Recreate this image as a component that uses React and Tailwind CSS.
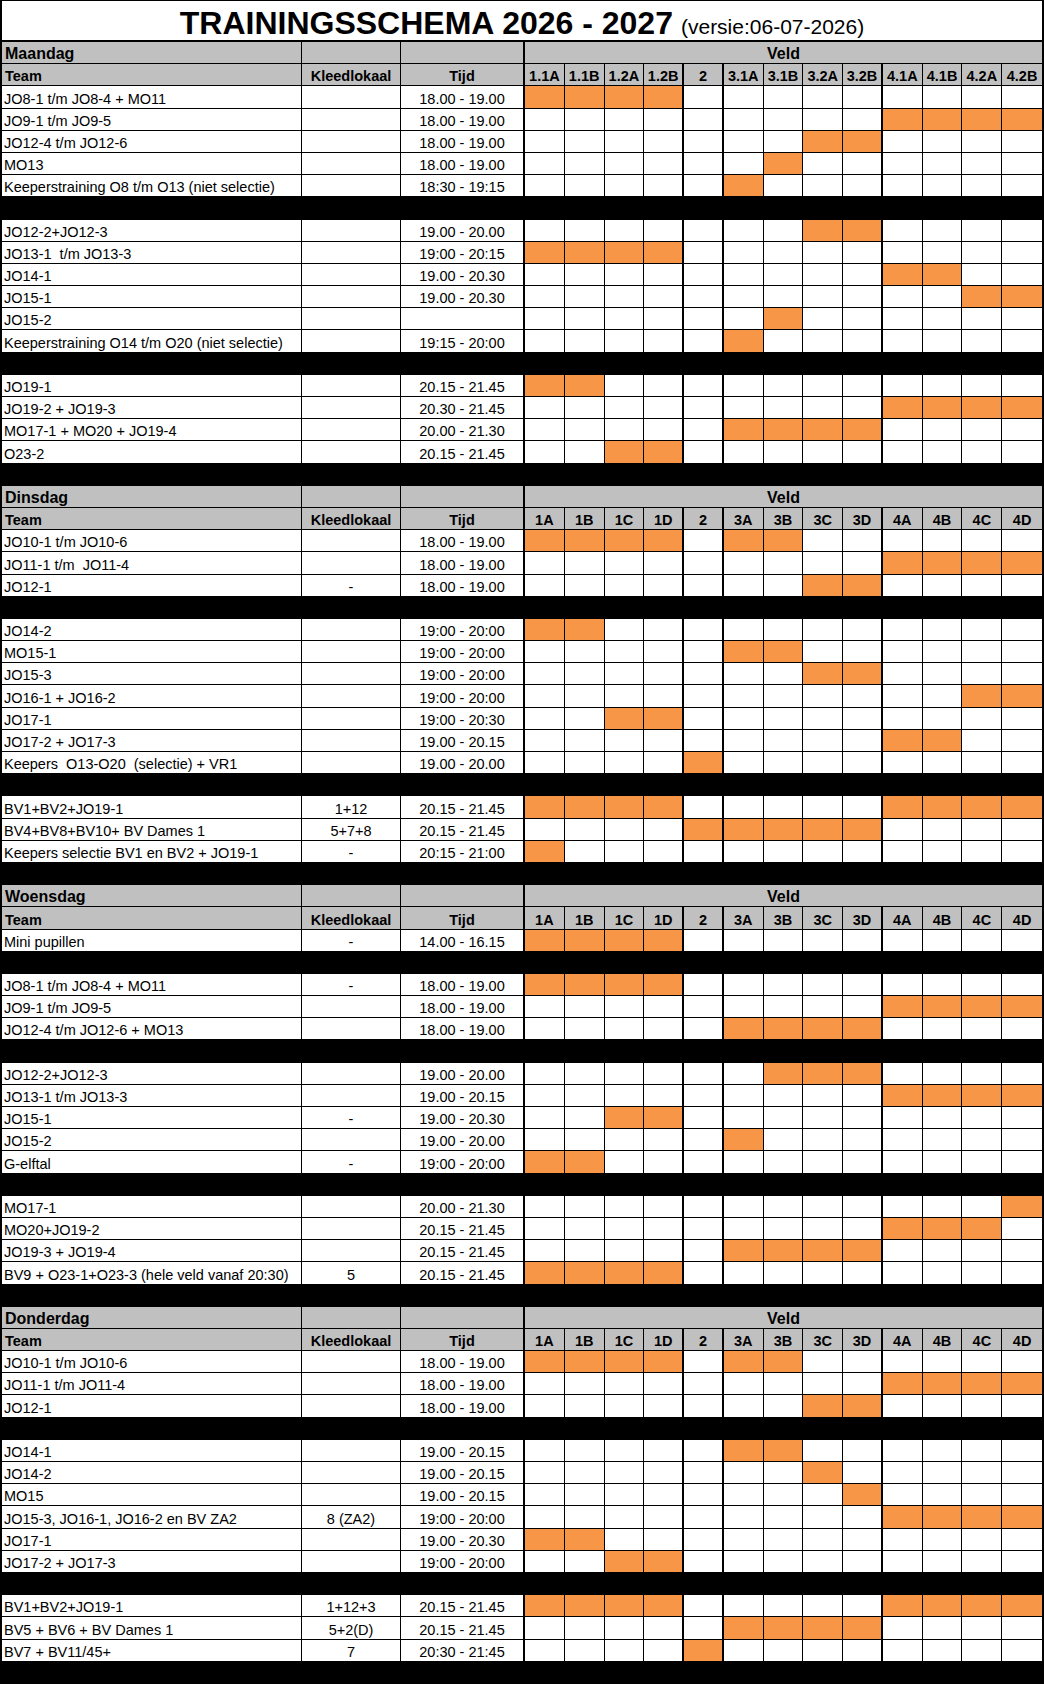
import React from "react";

const ORANGE = "bg-[#f79646]";
const GRID = "grid grid-cols-[300px_99px_124px_repeat(13,minmax(0,1fr))]";

const labelsA = ["1.1A", "1.1B", "1.2A", "1.2B", "2", "3.1A", "3.1B", "3.2A", "3.2B", "4.1A", "4.1B", "4.2A", "4.2B"];
const labelsB = ["1A", "1B", "1C", "1D", "2", "3A", "3B", "3C", "3D", "4A", "4B", "4C", "4D"];

const days = [
  {
    name: "Maandag",
    labels: labelsA,
    groups: [
      [
        ["JO8-1 t/m JO8-4 + MO11", "", "18.00 - 19.00", [0, 1, 2, 3]],
        ["JO9-1 t/m JO9-5", "", "18.00 - 19.00", [9, 10, 11, 12]],
        ["JO12-4 t/m JO12-6", "", "18.00 - 19.00", [7, 8]],
        ["MO13", "", "18.00 - 19.00", [6]],
        ["Keeperstraining O8 t/m O13 (niet selectie)", "", "18:30 - 19:15", [5]],
      ],
      [
        ["JO12-2+JO12-3", "", "19.00 - 20.00", [7, 8]],
        ["JO13-1  t/m JO13-3", "", "19:00 - 20:15", [0, 1, 2, 3]],
        ["JO14-1", "", "19.00 - 20.30", [9, 10]],
        ["JO15-1", "", "19.00 - 20.30", [11, 12]],
        ["JO15-2", "", "", [6]],
        ["Keeperstraining O14 t/m O20 (niet selectie)", "", "19:15 - 20:00", [5]],
      ],
      [
        ["JO19-1", "", "20.15 - 21.45", [0, 1]],
        ["JO19-2 + JO19-3", "", "20.30 - 21.45", [9, 10, 11, 12]],
        ["MO17-1 + MO20 + JO19-4", "", "20.00 - 21.30", [5, 6, 7, 8]],
        ["O23-2", "", "20.15 - 21.45", [2, 3]],
      ],
    ],
  },
  {
    name: "Dinsdag",
    labels: labelsB,
    groups: [
      [
        ["JO10-1 t/m JO10-6", "", "18.00 - 19.00", [0, 1, 2, 3, 5, 6]],
        ["JO11-1 t/m  JO11-4", "", "18.00 - 19.00", [9, 10, 11, 12]],
        ["JO12-1", "-", "18.00 - 19.00", [7, 8]],
      ],
      [
        ["JO14-2", "", "19:00 - 20:00", [0, 1]],
        ["MO15-1", "", "19:00 - 20:00", [5, 6]],
        ["JO15-3", "", "19:00 - 20:00", [7, 8]],
        ["JO16-1 + JO16-2", "", "19:00 - 20:00", [11, 12]],
        ["JO17-1", "", "19:00 - 20:30", [2, 3]],
        ["JO17-2 + JO17-3", "", "19.00 - 20.15", [9, 10]],
        ["Keepers  O13-O20  (selectie) + VR1", "", "19.00 - 20.00", [4]],
      ],
      [
        ["BV1+BV2+JO19-1", "1+12", "20.15 - 21.45", [0, 1, 2, 3, 9, 10, 11, 12]],
        ["BV4+BV8+BV10+ BV Dames 1", "5+7+8", "20.15 - 21.45", [4, 5, 6, 7, 8]],
        ["Keepers selectie BV1 en BV2 + JO19-1", "-", "20:15 - 21:00", [0]],
      ],
    ],
  },
  {
    name: "Woensdag",
    labels: labelsB,
    groups: [
      [["Mini pupillen", "-", "14.00 - 16.15", [0, 1, 2, 3]]],
      [
        ["JO8-1 t/m JO8-4 + MO11", "-", "18.00 - 19.00", [0, 1, 2, 3]],
        ["JO9-1 t/m JO9-5", "", "18.00 - 19.00", [9, 10, 11, 12]],
        ["JO12-4 t/m JO12-6 + MO13", "", "18.00 - 19.00", [5, 6, 7, 8]],
      ],
      [
        ["JO12-2+JO12-3", "", "19.00 - 20.00", [6, 7, 8]],
        ["JO13-1 t/m JO13-3", "", "19.00 - 20.15", [9, 10, 11, 12]],
        ["JO15-1", "-", "19.00 - 20.30", [2, 3]],
        ["JO15-2", "", "19.00 - 20.00", [5]],
        ["G-elftal", "-", "19:00 - 20:00", [0, 1]],
      ],
      [
        ["MO17-1", "", "20.00 - 21.30", [12]],
        ["MO20+JO19-2", "", "20.15 - 21.45", [9, 10, 11]],
        ["JO19-3 + JO19-4", "", "20.15 - 21.45", [5, 6, 7, 8]],
        ["BV9 + O23-1+O23-3 (hele veld vanaf 20:30)", "5", "20.15 - 21.45", [0, 1, 2, 3]],
      ],
    ],
  },
  {
    name: "Donderdag",
    labels: labelsB,
    groups: [
      [
        ["JO10-1 t/m JO10-6", "", "18.00 - 19.00", [0, 1, 2, 3, 5, 6]],
        ["JO11-1 t/m JO11-4", "", "18.00 - 19.00", [9, 10, 11, 12]],
        ["JO12-1", "", "18.00 - 19.00", [7, 8]],
      ],
      [
        ["JO14-1", "", "19.00 - 20.15", [5, 6]],
        ["JO14-2", "", "19.00 - 20.15", [7]],
        ["MO15", "", "19.00 - 20.15", [8]],
        ["JO15-3, JO16-1, JO16-2 en BV ZA2", "8 (ZA2)", "19:00 - 20:00", [9, 10, 11, 12]],
        ["JO17-1", "", "19.00 - 20.30", [0, 1]],
        ["JO17-2 + JO17-3", "", "19:00 - 20:00", [2, 3]],
      ],
      [
        ["BV1+BV2+JO19-1", "1+12+3", "20.15 - 21.45", [0, 1, 2, 3, 9, 10, 11, 12]],
        ["BV5 + BV6 + BV Dames 1", "5+2(D)", "20.15 - 21.45", [5, 6, 7, 8]],
        ["BV7 + BV11/45+", "7", "20:30 - 21:45", [4]],
      ],
    ],
  },
];

// rechterrand per veldkolom: dik na 1.2B, 2 en 3.2B
function veldBorder(i) {
  if (i === 12) return "";
  if (i === 3 || i === 4 || i === 8) return "border-r-2 border-black";
  return "border-r border-black";
}

function Separator() {
  return <div className="h-[22.2px] bg-black" />;
}

function DataRow({ row }) {
  const [team, kleed, tijd, fields] = row;
  return (
    <div className={`${GRID} h-[22.2px] border-b border-black leading-[18px] text-[14.5px]`}>
      <div className="flex items-end overflow-hidden whitespace-pre border-r border-black pl-[2px]">
        {team}
      </div>
      <div className="flex items-end justify-center border-r border-black">{kleed}</div>
      <div className="flex items-end justify-center border-r-2 border-black">{tijd}</div>
      {Array.from({ length: 13 }).map((_, i) => (
        <div key={i} className={`${veldBorder(i)} ${fields.includes(i) ? ORANGE : "bg-white"}`} />
      ))}
    </div>
  );
}

function DayBlock({ day }) {
  return (
    <div>
      <div className={`${GRID} h-[22.2px] border-b border-black bg-[#c0c0c0] font-bold leading-[18px] text-[16px]`}>
        <div className="flex items-end border-r border-black pl-[3px]">{day.name}</div>
        <div className="border-r border-black" />
        <div className="border-r-2 border-black" />
        <div className="col-span-13 flex items-end justify-center">Veld</div>
      </div>
      <div className={`${GRID} h-[22.2px] border-b border-black bg-[#c0c0c0] font-bold leading-[18px] text-[14.5px]`}>
        <div className="flex items-end border-r border-black pl-[3px]">Team</div>
        <div className="flex items-end justify-center border-r border-black">Kleedlokaal</div>
        <div className="flex items-end justify-center border-r-2 border-black">Tijd</div>
        {day.labels.map((l, i) => (
          <div key={l} className={`flex items-end justify-center ${veldBorder(i)}`}>
            {l}
          </div>
        ))}
      </div>
      {day.groups.map((g, gi) => (
        <div key={gi}>
          {g.map((row, ri) => (
            <DataRow key={ri} row={row} />
          ))}
          <Separator />
        </div>
      ))}
    </div>
  );
}

export default function App() {
  return (
    <div className="min-h-[1686px] w-[1044px] bg-white text-black font-['Liberation_Sans',Arial,sans-serif]">
      <div className="w-[1044px] border-x-2 border-t border-black">
        <div className="flex h-[41px] items-baseline justify-center border-b-2 border-black pt-[4px]">
          <span className="text-[32px] font-bold leading-[36px]">TRAININGSSCHEMA 2026 - 2027</span>
          <span className="ml-[8px] text-[21px] leading-[36px]">(versie:06-07-2026)</span>
        </div>
        {days.map((d) => (
          <DayBlock key={d.name} day={d} />
        ))}
      </div>
    </div>
  );
}
